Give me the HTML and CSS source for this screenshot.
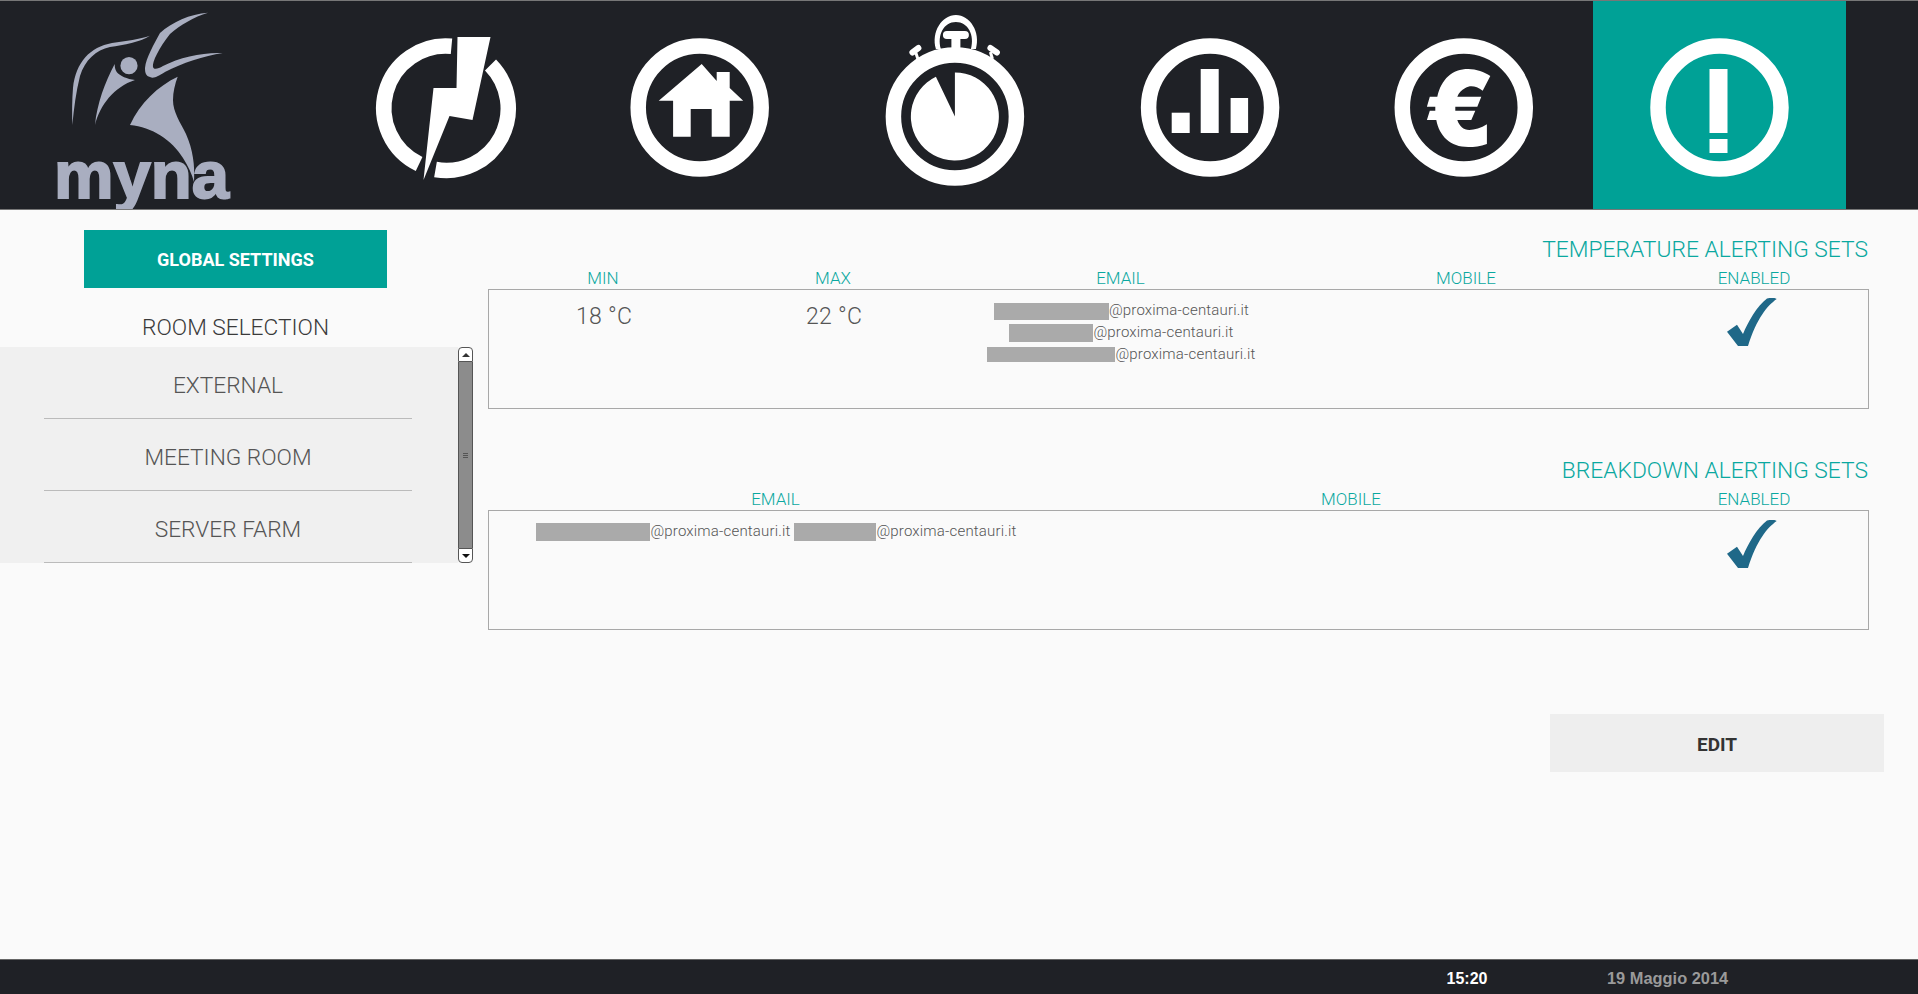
FILE: index.html

```html
<!DOCTYPE html>
<html lang="it">
<head>
    <meta charset="UTF-8">
    <title>Myna - Alerting</title>
    <link rel="stylesheet" href="styles.css">
</head>
<body>
    <header class="top-bar">
        <div class="logo">
            <svg viewBox="0 1 317.7 208" width="317.7" height="208">
                <g fill="#a9aec0">
                    <path d="M208 12.7C190 14 172 22 160 33C154 44 146 58 145 68C145 73 146 76 150 77C154 79 158 76 165 72C182 63 204 56 222.7 53C204 52 180 57 163 66C158 69 154 70 153 67C152 62 159 48 170 34C180 25 194 17 208 12.7Z"/>
                    <path d="M177.7 76.7C158 86 140 103 130 125C152 127 172 140 183 158C188 166 192 174 194 182C195 165 193 150 186 134C180 122 173 112 173 100C173 92 175 84 177.7 76.7Z"/>
                    <circle cx="129" cy="65.7" r="8.6"/>
                    <path d="M114.7 64C105 82 97 104 95 125C100 105 114 87 135 80C127 79 120 76 116.7 72C115 69 114.7 67 114.7 64Z"/>
                    <path d="M150 35.7C140 39 126 41 112 43C90 47 76 62 73 88C72 100 72 112 72.3 125C74 108 76 92 80 76C85 60 96 50 110 47C124 45 140 42 150 35.7Z"/>
                    <text class="logo-text" x="54" y="198">myna</text>
                </g>
            </svg>
        </div>
        <nav class="tabs">
            <a class="tab">
                <svg viewBox="319.5 1 253 208" width="253" height="208">
                    <path class="ring" d="M452 46.3A62 62 0 0 0 419.6 164"/>
                    <path class="ring" d="M491 65A62 62 0 0 1 436 169.5"/>
                    <path class="solid" d="M458 37H491L473 120L450 116L424 180L434 88H457Z"/>
                </svg>
            </a>
            <a class="tab">
                <svg viewBox="574.3 1 253 208" width="253" height="208">
                    <circle class="ring" cx="700" cy="107.5" r="61.5"/>
                    <path class="solid" d="M702 64L717 81V72H730V88L743.5 100.7H730V136.7H712V109H691V136.7H673.4V100.7H659Z"/>
                </svg>
            </a>
            <a class="tab">
                <svg viewBox="829.1 1 253 208" width="253" height="208">
                    <circle class="ring" cx="955" cy="116.5" r="61.5"/>
                    <path class="solid" d="M955 116.5V72.5A44 44 0 1 1 936 76.8Z"/>
                    <path class="solid" fill-rule="evenodd" d="M936 49C931 32 942 15 956 15C970 15 981 32 976 49H971C975 35 968 22 956 22C944 22 937 35 941 49Z"/>
                    <path class="solid" d="M947 31H965A4 4 0 0 1 965 39H960.5V52H951.5V39H947A4 4 0 0 1 947 31Z"/>
                    <path class="knob" d="M918 59L916 53"/>
                    <path class="knob-head" d="M912.5 52.500L918.500 48"/>
                    <path class="knob" d="M992.500 59L990.500 52"/>
                    <path class="knob-head" d="M990.500 48L997 52.500"/>
                </svg>
            </a>
            <a class="tab">
                <svg viewBox="1083.9 1 253 208" width="253" height="208">
                    <circle class="ring" cx="1210" cy="107.5" r="61.5"/>
                    <rect class="solid" x="1171.6" y="112.7" width="18" height="20.3"/>
                    <rect class="solid" x="1200.6" y="69" width="18" height="64"/>
                    <rect class="solid" x="1230.5" y="98" width="17.5" height="35"/>
                </svg>
            </a>
            <a class="tab">
                <svg viewBox="1338.7 1 253 208" width="253" height="208">
                    <circle class="ring" cx="1463.5" cy="107.5" r="61.5"/>
                    <path class="solid" d="M1490 76L1482.4 90.7C1476 86 1470 85 1465 88C1461 90 1458.5 93 1457 96.7H1481L1477 106.7H1455V110.7H1475L1471 120H1457C1459 126 1463 130 1469 130C1474 130 1481 128 1486.6 124.3V144C1480 146.500 1474 147 1468 147C1450 147 1439 136 1436 120H1426.600L1429.500 110.700H1435V106.700H1426.600L1429.500 96.700H1437C1441 79 1452 69 1468 69C1476 69 1484 72 1490 76Z"/>
                </svg>
            </a>
            <a class="tab tab-active">
                <svg viewBox="1593.5 1 253 208" width="253" height="208">
                    <circle class="ring" cx="1720" cy="107.5" r="61.5"/>
                    <rect class="solid" x="1710" y="69" width="18" height="64"/>
                    <rect class="solid" x="1710" y="139" width="18" height="14"/>
                </svg>
            </a>
        </nav>
    </header>

    <main class="page">
        <aside class="sidebar">
            <a class="global-btn">GLOBAL SETTINGS</a>
            <h2 class="room-title">ROOM SELECTION</h2>
            <div class="room-wrap">
                <ul class="room-list">
                    <li>EXTERNAL</li>
                    <li>MEETING ROOM</li>
                    <li>SERVER FARM</li>
                </ul>
                <div class="scrollbar">
                    <div class="scroll-btn scroll-up"><span class="arrow-up"></span></div>
                    <div class="scroll-thumb"><span class="grip"></span></div>
                    <div class="scroll-btn scroll-down"><span class="arrow-down"></span></div>
                </div>
            </div>
        </aside>

        <section class="content">
            <div class="alert-set first-set">
                <h2 class="set-title">TEMPERATURE ALERTING SETS</h2>
                <div class="cols cols-temp labels">
                    <span>MIN</span>
                    <span>MAX</span>
                    <span>EMAIL</span>
                    <span>MOBILE</span>
                    <span>ENABLED</span>
                </div>
                <div class="cols cols-temp set-box">
                    <div class="temp">18 °C</div>
                    <div class="temp">22 °C</div>
                    <div class="emails">
                        <div><span class="redact r1"></span>@proxima-centauri.it</div>
                        <div><span class="redact r2"></span>@proxima-centauri.it</div>
                        <div><span class="redact r3"></span>@proxima-centauri.it</div>
                    </div>
                    <div></div>
                    <div class="check">
                        <svg viewBox="0 0 50 48" width="50" height="48"><path d="M49.700 1C40 8 30 20 21 48H11L0 33.700L10 26.700L16 36C21 24 30 8 40 0.500C44 -0.500 48 -0.500 49.700 1Z"/></svg>
                    </div>
                </div>
            </div>

            <div class="alert-set">
                <h2 class="set-title">BREAKDOWN ALERTING SETS</h2>
                <div class="cols cols-fault labels">
                    <span>EMAIL</span>
                    <span>MOBILE</span>
                    <span>ENABLED</span>
                </div>
                <div class="cols cols-fault set-box">
                    <div class="emails">
                        <div><span class="redact r4"></span>@proxima-centauri.it <span class="redact r5"></span>@proxima-centauri.it</div>
                    </div>
                    <div></div>
                    <div class="check check-low">
                        <svg viewBox="0 0 50 48" width="50" height="48"><path d="M49.700 1C40 8 30 20 21 48H11L0 33.700L10 26.700L16 36C21 24 30 8 40 0.500C44 -0.500 48 -0.500 49.700 1Z"/></svg>
                    </div>
                </div>
            </div>

            <div class="actions">
                <a class="edit-btn">EDIT</a>
            </div>
        </section>
    </main>

    <footer class="bottom-bar">
        <span class="clock">15:20</span>
        <span class="date">19 Maggio 2014</span>
    </footer>
</body>
</html>
```

FILE: styles.css

```css
* {
    box-sizing: border-box;
}

body {
    margin: 0;
    height: 100vh;
    display: flex;
    flex-direction: column;
    overflow: hidden;
    background-color: #fafafa;
    font-family: Roboto, "Liberation Sans", sans-serif;
    font-weight: 300;
}

/* top bar */
.top-bar {
    display: flex;
    gap: 1.8px;
    height: 210px;
    flex-shrink: 0;
    background-color: #1f2126;
    border-top: 1px solid #777;
    border-bottom: 1px solid #777;
}

.logo {
    width: 317.7px;
    flex-shrink: 0;
}

.logo svg,
.tab svg {
    display: block;
}

.logo-text {
    font-family: "Liberation Sans", sans-serif;
    font-size: 67px;
    font-weight: 700;
    stroke: #a9aec0;
    stroke-width: 2px;
}

.tabs {
    display: flex;
    gap: 1.8px;
}

.tab {
    width: 253px;
    height: 208px;
}

.tab-active {
    background-color: #00a196;
}

.ring {
    fill: none;
    stroke: #fff;
    stroke-width: 15.5px;
}

.solid {
    fill: #fff;
}

.knob {
    fill: none;
    stroke: #fff;
    stroke-width: 3px;
}

.knob-head {
    fill: none;
    stroke: #fff;
    stroke-width: 6px;
    stroke-linecap: round;
}

/* page */
.page {
    flex: 1;
    display: flex;
}

.sidebar {
    width: 488px;
    flex-shrink: 0;
}

.global-btn {
    display: block;
    width: 303px;
    height: 58px;
    margin: 20px 0 0 84px;
    background-color: #00a196;
    color: #fff;
    font-size: 18px;
    font-weight: 700;
    line-height: 60px;
    text-align: center;
}

.room-title {
    width: 303px;
    margin: 22px 0 1px 84px;
    color: #3a3a3a;
    font-size: 22.7px;
    font-weight: 300;
    line-height: 36px;
    text-align: center;
}

.room-wrap {
    display: flex;
    width: 473px;
    height: 216px;
}

.room-list {
    width: 458px;
    margin: 0;
    padding: 0 46px 0 44px;
    list-style: none;
    background-color: #f0f0f0;
}

.room-list li {
    height: 72px;
    padding-top: 24px;
    border-bottom: 1px solid #bbb;
    color: #555;
    font-size: 22.7px;
    line-height: 29px;
    text-align: center;
}

.scrollbar {
    width: 15px;
    display: flex;
    flex-direction: column;
}

.scroll-btn {
    height: 15px;
    display: flex;
    align-items: center;
    justify-content: center;
    background-color: #fff;
    border: 1px solid #555;
}

.scroll-up {
    border-radius: 4px 4px 0 0;
}

.scroll-down {
    border-radius: 0 0 4px 4px;
}

.arrow-up {
    border-left: 4px solid transparent;
    border-right: 4px solid transparent;
    border-bottom: 4px solid #333;
}

.arrow-down {
    border-left: 4px solid transparent;
    border-right: 4px solid transparent;
    border-top: 4px solid #111;
}

.scroll-thumb {
    flex: 1;
    display: flex;
    align-items: center;
    justify-content: center;
    background-color: #8c8c8c;
    border-left: 1px solid #555;
    border-right: 1px solid #555;
}

.grip {
    width: 5px;
    height: 5px;
    border-top: 1px solid #555;
    border-bottom: 1px solid #555;
    background: linear-gradient(#8c8c8c 40%, #555 40%, #555 60%, #8c8c8c 60%);
}

/* alert sets */
.content {
    width: 1396px;
}

.alert-set {
    width: 1381px;
    margin-top: 45px;
}

.first-set {
    margin-top: 23px;
}

.set-title {
    margin: 0;
    padding: 4px 1px 0 0;
    color: #0aa8a0;
    font-size: 22.8px;
    font-weight: 300;
    line-height: 26px;
    text-align: right;
}

.cols {
    display: grid;
    text-align: center;
}

.cols-temp {
    grid-template-columns: 230px 230px 345px 346px 1fr;
}

.cols-fault {
    grid-template-columns: 575px 576px 1fr;
}

.labels {
    height: 26px;
    padding-top: 4px;
    color: #0aa8a0;
    font-size: 17px;
    line-height: 22px;
}

.set-box {
    height: 120px;
    border: 1px solid #a8a8a8;
}

.temp {
    padding-top: 12px;
    color: #555;
    font-size: 23px;
    letter-spacing: 0.3px;
    line-height: 30px;
}

.emails {
    padding-top: 9px;
    color: #555;
    font-size: 15px;
    letter-spacing: 0.18px;
    line-height: 22px;
}

.redact {
    display: inline-block;
    vertical-align: middle;
    background-color: #aaa;
}

.r1 {
    width: 115px;
    height: 17px;
}

.r2 {
    width: 84px;
    height: 18px;
}

.r3 {
    width: 128px;
    height: 15px;
    margin-bottom: 2px;
}

.r4 {
    width: 114px;
    height: 18px;
}

.r5 {
    width: 82px;
    height: 18px;
}

.check {
    padding-top: 8px;
}

.check-low {
    padding-top: 9px;
}

.check svg {
    display: block;
    margin-left: 87px;
    fill: #1f6888;
}

.actions {
    display: flex;
    justify-content: flex-end;
    margin-top: 84px;
}

.edit-btn {
    width: 334px;
    height: 58px;
    background-color: #eee;
    color: #333;
    font-size: 19px;
    font-weight: 700;
    line-height: 62px;
    text-align: center;
}

/* bottom bar */
.bottom-bar {
    height: 35px;
    flex-shrink: 0;
    display: flex;
    padding-left: 1446.500px;
    background-color: #1f2126;
    border-top: 1px solid #666;
    font-family: "Liberation Sans", sans-serif;
    font-size: 16px;
    font-weight: 700;
    line-height: 37px;
}

.clock {
    width: 160.500px;
    color: #fff;
}

.date {
    color: #9a9a9a;
    font-size: 16.4px;
}
```
